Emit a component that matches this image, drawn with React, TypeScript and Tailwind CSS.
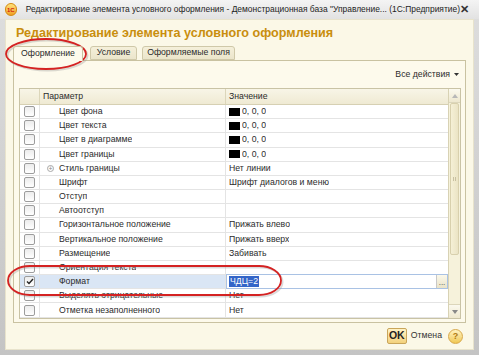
import React from 'react';

type Row = {
  name: string;
  value?: string;
  swatch?: boolean;
  expand?: boolean;
  checked?: boolean;
  selected?: boolean;
};

const ROWS: Row[] = [
  { name: 'Цвет фона', value: '0, 0, 0', swatch: true },
  { name: 'Цвет текста', value: '0, 0, 0', swatch: true },
  { name: 'Цвет в диаграмме', value: '0, 0, 0', swatch: true },
  { name: 'Цвет границы', value: '0, 0, 0', swatch: true },
  { name: 'Стиль границы', value: 'Нет линии', expand: true },
  { name: 'Шрифт', value: 'Шрифт диалогов и меню' },
  { name: 'Отступ' },
  { name: 'Автоотступ' },
  { name: 'Горизонтальное положение', value: 'Прижать влево' },
  { name: 'Вертикальное положение', value: 'Прижать вверх' },
  { name: 'Размещение', value: 'Забивать' },
  { name: 'Ориентация текста' },
  { name: 'Формат', value: 'ЧДЦ=2', checked: true, selected: true },
  { name: 'Выделять отрицательные', value: 'Нет' },
  { name: 'Отметка незаполненного', value: 'Нет' },
];

const Checkbox = ({ checked }: { checked?: boolean }) => (
  <div className="w-[11px] h-[11px] rounded-[2px] border border-[#9c9c9c] bg-gradient-to-b from-[#ececec] to-white flex items-center justify-center">
    {checked && (
      <svg width="8" height="7" viewBox="0 0 8 7">
        <path d="M1 3.5 L3 5.5 L7 1" fill="none" stroke="#222" strokeWidth="1.4" />
      </svg>
    )}
  </div>
);

const TableRow = ({ row, i }: { row: Row; i: number }) => (
  <div
    className={`flex border-b border-[#e4e4e4] ${i % 3 === 2 ? 'h-[15px]' : 'h-[14px]'} ${
      row.selected ? 'bg-[#dae6f5]' : 'bg-white'
    }`}
  >
    <div className="w-[20px] shrink-0 flex items-center justify-center border-r border-[#e4e4e4]">
      <Checkbox checked={row.checked} />
    </div>
    <div className="w-[186px] shrink-0 flex items-center border-r border-[#e4e4e4] relative">
      {row.expand && (
        <span className="absolute left-[7px] w-[7px] h-[7px] rounded-full border border-[#a8a8a8] text-[#888] text-[7px] leading-[5px] flex items-center justify-center">
          +
        </span>
      )}
      <span className="pl-[19px] truncate">{row.name}</span>
    </div>
    {row.selected ? (
      <div className="flex-1 flex items-center bg-white border border-[#a9c2e4] -my-px">
        <span className="ml-[2px] bg-[#3365c8] text-white px-[1px] leading-[11px]">{row.value}</span>
        <div className="ml-auto w-[11px] h-full border-l border-[#c8c8c8] bg-gradient-to-b from-[#fbf8ea] to-[#e9e3c8] flex items-end justify-center text-[8px] leading-[10px] text-[#444]">
          ...
        </div>
      </div>
    ) : (
      <div className="flex-1 flex items-center pl-[3px]">
        {row.swatch && <span className="w-[11px] h-[8px] bg-black mr-[2px] shrink-0" />}
        <span className="truncate">{row.value}</span>
      </div>
    )}
  </div>
);

const Scrollbar = () => (
  <div className="w-[12px] shrink-0 bg-[#f6f2db] border-l border-[#d8d2b4] flex flex-col">
    <div className="h-[14px] flex items-center justify-center border-b border-[#dcd6bb] bg-gradient-to-b from-[#fbf9ee] to-[#eee8cf]">
      <svg width="6" height="4" viewBox="0 0 6 4">
        <path d="M0 4 L3 0 L6 4 Z" fill="#b8b8b8" />
      </svg>
    </div>
    <div className="h-[152px] mx-px bg-gradient-to-r from-[#f5f0d6] to-[#ebe4c5] border border-[#d8d0ad] rounded-[2px] flex items-center justify-center">
      <div className="w-[3px] h-[4px] border-l border-r border-[#c8c0a0]" />
    </div>
    <div className="flex-1" />
    <div className="h-[14px] flex items-center justify-center border-t border-[#dcd6bb] bg-gradient-to-b from-[#fbf9ee] to-[#eee8cf]">
      <svg width="6" height="4" viewBox="0 0 6 4">
        <path d="M0 0 L3 4 L6 0 Z" fill="#888" />
      </svg>
    </div>
  </div>
);

export default function App() {
  return (
    <div
      className="relative w-[479px] h-[355px] overflow-hidden bg-gradient-to-b from-[#dedede] to-[#c4c4c4] flex flex-col text-[8.7px] text-[#2b2b2b]"
      style={{ fontFamily: '"Liberation Sans", Arial, sans-serif' }}
    >
      {/* title bar */}
      <div className="h-[19px] shrink-0 flex items-center pl-[5px] pr-[10px] bg-gradient-to-b from-[#f4f4f4] to-[#e2e2e2]">
        <div className="w-[13px] h-[13px] rounded-full bg-gradient-to-b from-[#ffe27a] to-[#f0a020] border border-[#d48a10] flex items-center justify-center">
          <span className="text-[6px] font-bold text-[#d02010] leading-none">1С</span>
        </div>
        <span className="ml-[9px] text-[8.45px] text-[#1e1e1e] whitespace-nowrap">
          Редактирование элемента условного оформления - Демонстрационная база "Управление... (1С:Предприятие)
        </span>
        <span className="ml-auto text-[11px] font-bold text-[#333] leading-none">✕</span>
      </div>

      {/* client area */}
      <div className="flex-1 mx-[5px] mb-[5px] bg-[#fbf8e7] border border-[#e8e3cc] flex flex-col">
        <div className="h-[26px] shrink-0 pl-[10px] flex items-center pt-[1px]">
          <span className="text-[12.6px] font-bold text-[#c98e0e] leading-none">
            Редактирование элемента условного оформления
          </span>
        </div>

        {/* tabs */}
        <div className="flex items-end pl-[7px] h-[14px] shrink-0 relative z-10">
          <div className="h-[15px] w-[70px] border border-[#c9c2a1] border-b-0 rounded-t-[3px] bg-[#fdfaec] flex items-center justify-center -mb-px">
            Оформление
          </div>
          <div className="ml-[7px] h-[14px] w-[47px] border border-[#cfc8a8] rounded-t-[3px] bg-gradient-to-b from-[#f5f0da] to-[#ebe5cb] flex items-center justify-center">
            Условие
          </div>
          <div className="ml-[5px] h-[14px] w-[93px] border border-[#cfc8a8] rounded-t-[3px] bg-gradient-to-b from-[#f5f0da] to-[#ebe5cb] flex items-center justify-center">
            Оформляемые поля
          </div>
        </div>

        {/* panel */}
        <div className="mx-[7px] h-[263px] shrink-0 border border-[#c9c2a1] bg-[#fdfaec] flex flex-col pl-[5px] pr-[4px]">
          <div className="h-[27px] shrink-0 flex items-center justify-end pr-[2px]">
            <span>Все действия</span>
            <svg className="ml-[4px]" width="5" height="3" viewBox="0 0 5 3">
              <path d="M0 0 L2.5 3 L5 0 Z" fill="#333" />
            </svg>
          </div>

          <div className="h-[231px] border border-[#c9c3a5] flex bg-white">
            <div className="flex-1 flex flex-col">
              <div className="h-[16px] shrink-0 flex bg-gradient-to-b from-[#f8f5e7] to-[#efead3] border-b border-[#d6d0b3]">
                <div className="w-[20px] border-r border-[#dcd6ba]" />
                <div className="w-[186px] border-r border-[#dcd6ba] flex items-center pl-[3px]">Параметр</div>
                <div className="flex-1 flex items-center pl-[3px]">Значение</div>
              </div>
              {ROWS.map((r, i) => (
                <TableRow key={r.name} row={r} i={i} />
              ))}
            </div>
            <Scrollbar />
          </div>
        </div>

        {/* footer */}
        <div className="flex-1 flex items-center justify-end pr-[10px] gap-[4px]">
          <div className="h-[16px] w-[20px] border border-[#c9a55a] rounded-[2px] bg-gradient-to-b from-[#fff2c4] to-[#f3d27d] flex items-center justify-center font-bold text-[10.5px] text-[#222]">
            OK
          </div>
          <span className="text-[#333]">Отмена</span>
          <div className="ml-[2px] w-[15px] h-[15px] rounded-full border border-[#d8a84a] bg-gradient-to-b from-[#fff3c0] to-[#f0c850] flex items-center justify-center text-[9px] font-bold text-[#b07a10] leading-none">
            ?
          </div>
        </div>
      </div>

      {/* red annotation ellipses */}
      <svg className="absolute left-0 top-0 pointer-events-none" width="479" height="355">
        <ellipse cx="46" cy="54" rx="40" ry="15" fill="none" stroke="#999" strokeOpacity="0.35" strokeWidth="2" transform="translate(1.5 1.5)" />
        <ellipse cx="46" cy="54" rx="40" ry="15" fill="none" stroke="#d42222" strokeWidth="1.8" />
        <rect x="8" y="266" width="273" height="29" rx="22" ry="14.5" fill="none" stroke="#999" strokeOpacity="0.35" strokeWidth="2" transform="translate(1.5 1.5)" />
        <rect x="8" y="266" width="273" height="29" rx="22" ry="14.5" fill="none" stroke="#d42222" strokeWidth="1.8" />
      </svg>
    </div>
  );
}
